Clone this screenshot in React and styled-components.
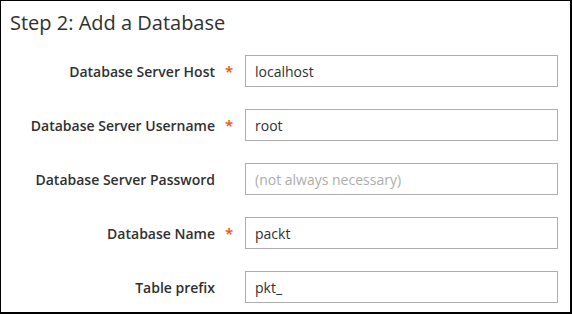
import React from "react";
import styled, { createGlobalStyle } from "styled-components";

const GlobalStyle = createGlobalStyle`
  html, body {
    margin: 0;
    padding: 0;
    background: #ffffff;
  }
  * {
    box-sizing: border-box;
  }
`;

const Frame = styled.div`
  width: 572px;
  height: 314px;
  border-style: solid;
  border-color: #000000;
  border-width: 1px 2px 2px 1px;
  background: #ffffff;
  font-family: "Open Sans", "Liberation Sans", sans-serif;
  color: #303030;
  overflow: hidden;
`;

const Title = styled.h2`
  margin: 0;
  padding: 9px 0 0 9px;
  font-size: 20px;
  font-weight: 400;
  line-height: 26px;
  color: #303030;
`;

const Form = styled.div`
  display: flex;
  flex-direction: column;
  gap: 22px;
  padding-top: 19px;
`;

const Row = styled.div`
  display: grid;
  grid-template-columns: 214px 30px 313px;
  align-items: center;
  height: 32px;
`;

const Label = styled.label`
  text-align: right;
  font-size: 14px;
  font-weight: 600;
  color: #303030;
`;

const Required = styled.span`
  padding-left: 10px;
  font-size: 15px;
  font-weight: 600;
  color: #eb5202;
  visibility: ${(p) => (p.$show ? "visible" : "hidden")};
`;

const Input = styled.input`
  width: 313px;
  height: 32px;
  border: 1px solid #adadad;
  border-radius: 0;
  padding: 0 9px;
  font-family: "Open Sans", "Liberation Sans", sans-serif;
  font-size: 14px;
  color: #303030;
  background: #ffffff;
  outline: none;

  &::placeholder {
    color: #adadad;
    opacity: 1;
  }
`;

const fields = [
  { label: "Database Server Host", value: "localhost", required: true },
  { label: "Database Server Username", value: "root", required: true },
  {
    label: "Database Server Password",
    placeholder: "(not always necessary)",
    required: false,
  },
  { label: "Database Name", value: "packt", required: true },
  { label: "Table prefix", value: "pkt_", required: false },
];

export default function App() {
  return (
    <>
      <GlobalStyle />
      <Frame>
        <Title>Step 2: Add a Database</Title>
        <Form>
          {fields.map((f) => (
            <Row key={f.label}>
              <Label>{f.label}</Label>
              <Required $show={f.required}>*</Required>
              <Input
                type="text"
                defaultValue={f.value}
                placeholder={f.placeholder}
              />
            </Row>
          ))}
        </Form>
      </Frame>
    </>
  );
}
